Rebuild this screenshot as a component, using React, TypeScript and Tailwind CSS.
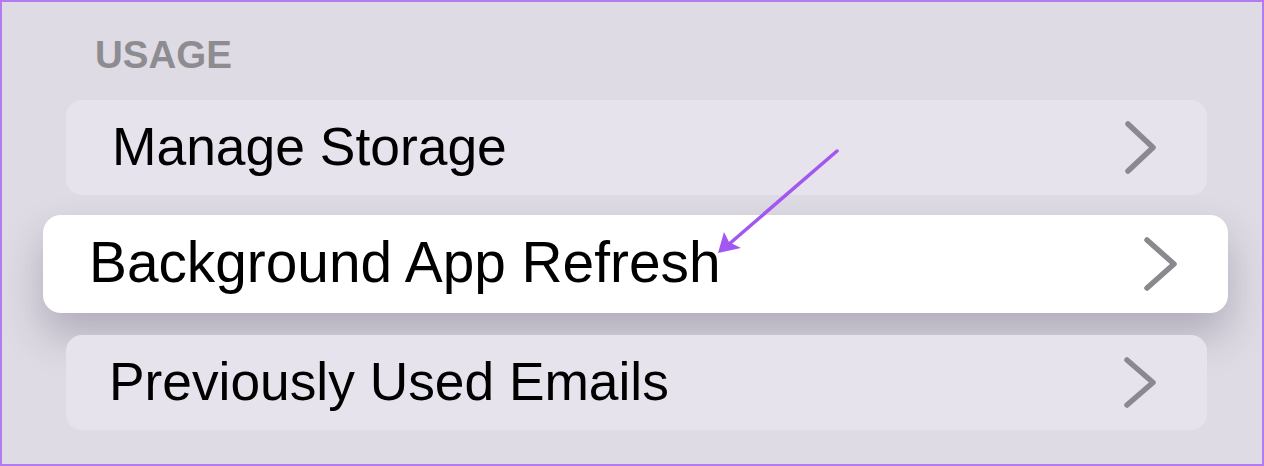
import React from 'react';

const Chevron = ({ w, h }: { w: number; h: number }) => (
  <svg width={w + 6} height={h + 6} viewBox={`0 0 ${w + 6} ${h + 6}`} className="shrink-0">
    <polyline
      points={`3,3 ${w + 3},${h / 2 + 3} 3,${h + 3}`}
      fill="none"
      stroke="#8a898f"
      strokeWidth={5.5}
      strokeLinecap="round"
      strokeLinejoin="round"
    />
  </svg>
);

export default function App() {
  return (
    <div
      className="relative w-[1264px] h-[466px] overflow-hidden border-2 border-[#b27cf0] bg-[#dedbe4] pt-[34px]"
      style={{ fontFamily: '"Liberation Sans", Arial, sans-serif' }}
    >
      {/* section header */}
      <div className="pl-[93px] text-[38.5px] leading-none font-bold text-[#8d8c91]">USAGE</div>

      <div className="mt-[25px] flex flex-col">
        <div className="ml-[64px] mr-[55px] h-[95px] rounded-[16px] bg-[#e6e3ec] flex items-center justify-between pl-[46px] pr-[51px]">
          <span className="text-[53.4px] leading-none text-black">Manage Storage</span>
          <Chevron w={25} h={47} />
        </div>

        <div className="mt-[20px] ml-[41px] mr-[34px] h-[98px] rounded-[18px] bg-white flex items-center justify-between pl-[46px] pr-[51px] shadow-[0_22px_40px_rgba(60,50,80,0.28)]">
          <span className="text-[56.8px] leading-none text-black">Background App Refresh</span>
          <Chevron w={27} h={48} />
        </div>

        <div className="mt-[22px] ml-[64px] mr-[55px] h-[95px] rounded-[16px] bg-[#e6e3ec] flex items-center justify-between pl-[43px] pr-[51px]">
          <span className="text-[53.3px] leading-none text-black">Previously Used Emails</span>
          <Chevron w={26} h={45} />
        </div>
      </div>

      {/* annotation arrow */}
      <svg className="absolute left-0 top-0 pointer-events-none" width={1264} height={466}>
        <line x1={835} y1={149} x2={726} y2={243} stroke="#a257f0" strokeWidth={3.5} strokeLinecap="round" />
        <path d="M716 251 L722 230 L727 240 L739 246 Z" fill="#a257f0" />
      </svg>
    </div>
  );
}
